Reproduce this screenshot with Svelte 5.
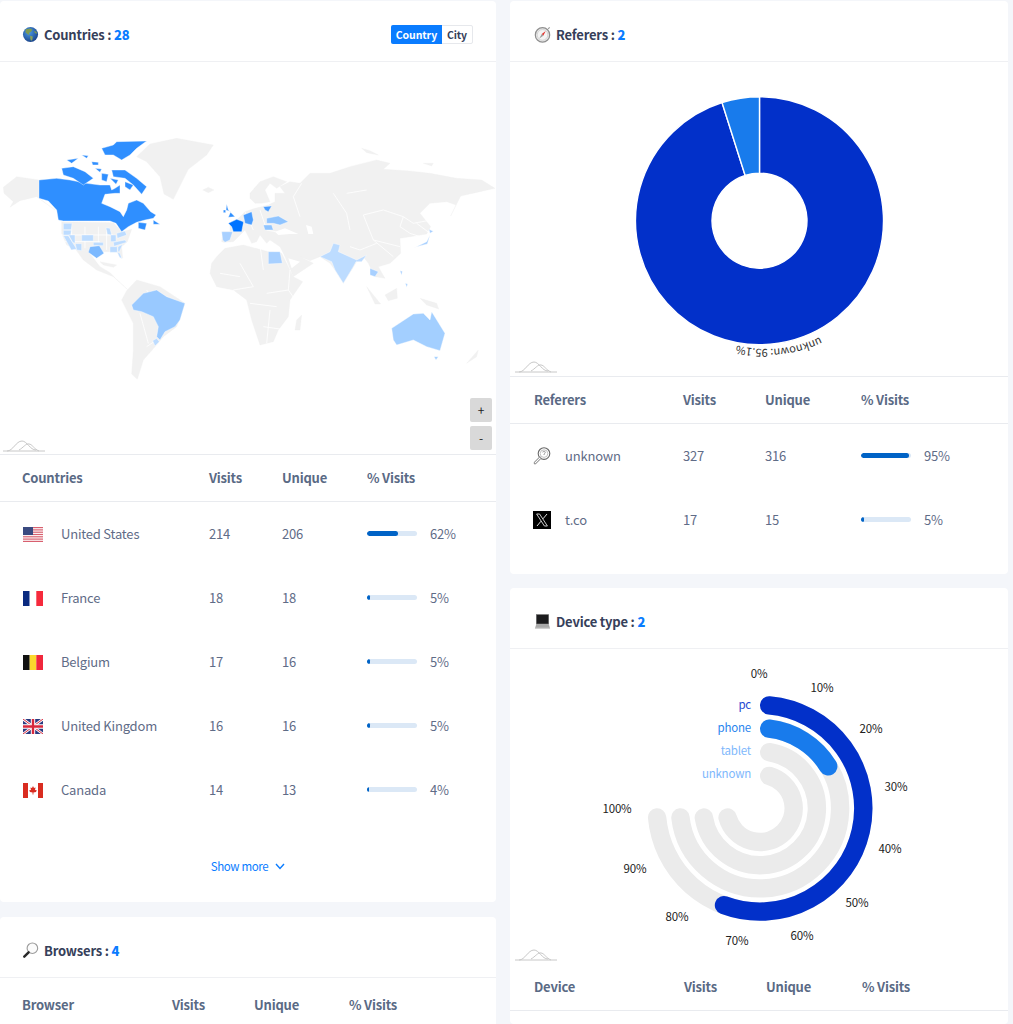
<script>
	const countries = [
		{ flag: 'us', name: 'United States', visits: 214, unique: 206, pct: 62 },
		{ flag: 'fr', name: 'France', visits: 18, unique: 18, pct: 5 },
		{ flag: 'be', name: 'Belgium', visits: 17, unique: 16, pct: 5 },
		{ flag: 'gb', name: 'United Kingdom', visits: 16, unique: 16, pct: 5 },
		{ flag: 'ca', name: 'Canada', visits: 14, unique: 13, pct: 4 }
	];
	const referers = [
		{ flag: 'unknown', name: 'unknown', visits: 327, unique: 316, pct: 95 },
		{ flag: 'x', name: 't.co', visits: 17, unique: 15, pct: 5 }
	];

	// map shapes, drawn at 3x page scale with y starting at 130
	const grey = '#f1f1f1';
	const shift = (dx, dy) => (pts) => pts.map((p, i) => (i % 2 === 0 ? p + dx : p + dy)).join(' ');
	const R = shift(750, 0);
	const N = shift(90, 15);
	const E = shift(630, 90);
	const land = [
		'10,172 50,140 117,150 117,205 165,240 140,222 110,200 60,212 30,232 40,215 12,190',
		'410,80 450,42 530,25 640,45 620,75 565,118 520,208 492,192 480,140 440,95',
		'608,180 625,172 642,180 625,188',
		'185,275 340,278 365,305 395,298 382,335 365,350 368,385 350,365 300,365 290,382 265,365 225,355 200,345 185,310',
		'225,355 265,365 300,410 330,428 352,450 382,478 340,440 290,420 250,390',
		'380,482 410,450 480,470 555,520 530,590 490,620 465,650 430,690 412,748 395,732 400,660 400,580 365,510',
		'300,395 350,405 340,412 310,405',
		E([20,290,45,265,100,255,175,275]) + ' ' + R([55,365,95,370,130,440,158,455,120,510,115,560,85,600,70,635,30,645,5,570,-10,510]) + ' 700,480 650,470 630,430 635,400',
		R([155,555,150,600,135,600,140,570]),
		'665,335 668,305 690,305 690,280 715,265 735,245 765,235 805,225 825,215 825,190 855,190 840,170 870,155 900,160 930,130 ' +
			R([240,130,300,110,380,90,420,100,400,118,470,122,540,130,620,145,695,150,735,175,690,185,632,198,602,258,618,225,590,215,540,220,510,250,542,290,530,312,480,320,450,325,452,370,420,400,385,410,405,445,375,440,355,400,340,380,320,395,280,460,255,420,240,400,210,380,180,392,150,380,190,400,130,440,105,380,90,350,60,330]) +
			' 800,340 780,315 770,335 755,340 735,300 730,305 700,335 670,337',
		E([120,100,150,65,190,50,230,65,200,85,180,70,165,90,180,125,155,130,135,130,120,115]),
		R([350,470,392,522,375,522]),
		R([405,495,440,475,442,505,415,512]),
		R([510,505,560,520,566,537,530,525]),
		R([650,700,685,660,680,680]),
		R([335,55,360,62,385,75,350,68]),
		R([520,100,550,100,545,108])
	];
	// seas cut out of the grey land
	const seas = [
		E([195,215,225,205,265,222,240,222,205,225]),
		R([168,285,185,290,190,312,175,312]),
		R([115,385,150,395,125,415])
	];
	const canada = [
		N([27,135,80,130,120,135,170,145,210,150,240,150,245,165,255,160,270,150,270,175,255,175,225,178,215,205,240,215,270,230,280,245,290,225,295,205,320,195,340,205,362,230,378,240,370,250,345,255,320,262,295,275,275,290,258,265,240,258,100,258,85,255,80,225,55,198,27,190]),
		N([215,40,250,30,260,20,350,18,320,40,300,60,275,75,250,60,225,60]),
		N([245,105,285,105,320,130,350,155,335,178,310,150,285,130,250,125]),
		N([95,100,130,95,165,110,190,130,160,150,130,130,100,120]),
		N([110,75,145,70,125,85]),
		N([185,80,205,82,205,90,188,90]),
		N([155,60,175,62,170,70]),
		N([215,115,235,118,230,140,215,135]),
		N([195,100,215,102,210,112]),
		N([240,130,265,135,258,148]),
		N([285,140,310,150,300,165,285,155]),
		N([325,262,350,265,345,285,325,280]),
		N([370,255,390,268,370,268])
	];
	const states = [
		N([100,265,126,265,124,284,100,284]), N([100,286,124,286,122,300,100,300]),
		N([100,302,115,302,140,342,124,345]), N([116,300,135,300,135,325,128,322]),
		N([136,326,155,326,155,347,140,345]), N([155,300,190,300,190,318,155,318]),
		N([228,278,240,280,245,300,232,298]), N([242,300,258,300,258,320,242,320]),
		N([260,295,285,288,290,300,262,310]), N([250,322,285,315,290,322,252,334]),
		N([240,335,262,335,262,352,240,352]), N([264,335,278,328,268,350,264,350]),
		N([190,322,220,322,220,332,190,332]), N([262,352,270,355,276,372,268,366])
	];
	const blues = [
		{ fill: '#2f8fff', shapes: canada },
		{ fill: '#bddcff', shapes: states },
		{ fill: '#7cb9ff', shapes: [N([180,335,208,332,222,355,200,370,175,352])] },
		{ fill: '#99c9ff', shapes: ['395,525 430,490 470,480 500,500 555,520 540,570 525,590 495,605 480,630 470,620 475,590 460,560 425,545 400,540'] },
		{ fill: '#bddcff', shapes: ['458,632 470,625 478,635 465,648'] },
		{ fill: '#0073ff', shapes: [E([55,190,80,178,100,185,100,190,95,215,70,215,65,200])] },
		{ fill: '#2f8fff', shapes: [E([50,132,55,150,75,170,55,172,62,155,48,150]), E([40,150,47,150,47,158,40,158])] },
		{ fill: '#4a9dff', shapes: [E([100,165,125,155,130,180,125,195,105,190]), E([160,140,185,138,175,155,165,150])] },
		{ fill: '#a8d0ff', shapes: [E([35,215,68,215,60,240,45,247,38,240])] },
		{ fill: '#8fc4ff', shapes: [E([170,175,205,168,235,185,210,195,190,190,170,190]), E([160,195,185,195,190,210,165,210])] },
		{ fill: '#a8d0ff', shapes: [R([55,365,90,365,97,400,55,402]), R([360,415,385,425,375,440,360,435]), R([490,355,530,335,540,315,532,342,500,350]), R([537,298,550,304,540,310]), R([450,422,457,424,455,436]), R([466,460,473,462,470,472])] },
		{ fill: '#bddcff', shapes: [R([210,380,240,365,250,340,270,345,265,365,320,390,350,375,335,395,318,395,310,410,280,460,255,420,245,395])] },
		{ fill: '#a3cfff', shapes: [R([425,595,490,552,520,550,540,570,545,545,585,610,570,662,530,650,490,630,440,645,430,630]), R([552,680,565,680,558,690])] }
	];
	// white borders over the grey land
	const borders = [
		'M215,290V355 M255,290V355 M295,290V345 M185,315H340 M195,335H300 M320,300V360 M345,320V350',
		'M905,160L880,200L900,260 M1000,190L1040,250L1050,300 M1090,255L1150,240L1210,260L1240,280L1320,265L1400,260 M1250,280L1290,310L1340,335L1400,330 M1210,260L1200,290L1230,310L1260,320',
		'M870,420L865,480L800,490 M900,430L960,430L940,510 M865,480L900,530L860,590 M780,345L790,420 M720,400L760,470 M750,520L830,530 M790,590L860,600 M810,540L800,640 M660,430L720,440 M700,480L760,470',
		'M440,480L470,530L430,545 M420,550L445,640 M470,630L440,650 M1090,255L1120,330L1200,350 M1120,330L1180,380',
		'M1130,340L1080,360L1050,350 M1100,180L1040,190 M735,245L760,300 M780,240L800,300L850,310 M700,280L730,240'
	];

	const polar = (x, y, r, deg) => {
		const a = ((deg - 90) * Math.PI) / 180;
		return [x + r * Math.cos(a), y + r * Math.sin(a)];
	};
	// donut, centre 759.5,220.7
	const cx = 759.5;
	const cy = 220.7;
	const slice = (from, to, ro, ri) => {
		const [a, b] = polar(cx, cy, ro, from);
		const [c, d] = polar(cx, cy, ro, to);
		const [e, f] = polar(cx, cy, ri, to);
		const [g, h] = polar(cx, cy, ri, from);
		const big = to - from > 180 ? 1 : 0;
		return `M${a} ${b}A${ro} ${ro} 0 ${big} 1 ${c} ${d}L${e} ${f}A${ri} ${ri} 0 ${big} 0 ${g} ${h}Z`;
	};

	// radial bars, centre 760,808
	const rx = 760;
	const ry = 808.3;
	const arc = (r, deg) => {
		const inset = (Math.asin(9.2 / r) * 180) / Math.PI;
		const [a, b] = polar(rx, ry, r, inset);
		const [c, d] = polar(rx, ry, r, deg - inset);
		return `M${a} ${b}A${r} ${r} 0 ${deg - 2 * inset > 180 ? 1 : 0} 1 ${c} ${d}`;
	};
	const rings = [
		{ label: 'pc', r: 103.3, deg: 205.5, color: '#0230c9', text: '#2448d2', y: 704 },
		{ label: 'phone', r: 80.1, deg: 65, color: '#187bec', text: '#2a85ee', y: 727 },
		{ label: 'tablet', r: 56.9, deg: 0, color: '', text: '#80b8fc', y: 750 },
		{ label: 'unknown', r: 33.7, deg: 0, color: '', text: '#80b8fc', y: 773 }
	];
	const ticks = [
		['0%', 759, 673], ['10%', 822, 687], ['20%', 871, 728], ['30%', 896, 786],
		['40%', 890, 848], ['50%', 857, 902], ['60%', 802, 935], ['70%', 737, 940],
		['80%', 677, 916], ['90%', 635, 868], ['100%', 617, 808]
	];
</script>

{#snippet amLogo(x, y)}
	<g transform="translate({x} {y})" fill="none" stroke="#c8c8c8" stroke-width="1">
		<path d="M0 11H42" />
		<path d="M4 11C10 11 13 1 19 1C24 1 27 10 33 10" />
		<path d="M16 10C20 8 23 3 26 4C29 4 31 9 36 11" />
	</g>
{/snippet}

{#snippet flagIcon(kind)}
	{#if kind === 'unknown' || kind === 'x'}
		<svg class="flag square" viewBox="0 0 18 18">
			{#if kind === 'unknown'}
				<circle cx="11" cy="6.6" r="5.8" fill="#fff" stroke="#6a6a6a" stroke-width="1.1" />
				<circle cx="11" cy="6.6" r="3.8" fill="none" stroke="#b5b5b5" stroke-width=".8" />
				<path d="M9.8 5.4C9.8 3.8 12.4 3.8 12.2 5.6C12 6.6 11 6.4 11 8" fill="none" stroke="#888" stroke-width=".9" />
				<path d="M7 11L2 16" stroke="#777" stroke-width="2.6" stroke-linecap="round" />
				<path d="M7 11L2 16" stroke="#fff" stroke-width="1.1" stroke-linecap="round" />
			{:else}
				<rect width="18" height="18" fill="#000" />
				<path d="M3.6 3H6.6L14.4 15H11.4Z" fill="none" stroke="#ddd" stroke-width=".9" />
				<path d="M14 3L10 7.8M8 10.2L4 15" stroke="#ddd" stroke-width="1" />
			{/if}
		</svg>
	{:else}
		<svg class="flag" viewBox="0 0 20 15">
			{#if kind === 'us'}
				<rect width="20" height="15" fill="#fff" />
				{#each [0, 2.3, 4.6, 6.9, 9.2, 11.5, 13.8] as s}
					<rect y={s} width="20" height="1.2" fill="#d8606f" />
				{/each}
				<rect width="10" height="8" fill="#3a4a80" />
			{:else if kind === 'fr'}
				<rect width="6.7" height="15" fill="#0a2a80" />
				<rect x="6.7" width="6.6" height="15" fill="#fff" />
				<rect x="13.3" width="6.7" height="15" fill="#f62a3c" />
			{:else if kind === 'be'}
				<rect width="6.7" height="15" fill="#111" />
				<rect x="6.7" width="6.6" height="15" fill="#fbd92c" />
				<rect x="13.3" width="6.7" height="15" fill="#f0283c" />
			{:else if kind === 'gb'}
				<rect width="20" height="15" fill="#2a3a80" />
				<path d="M0 0L20 15M20 0L0 15" stroke="#fff" stroke-width="2.6" />
				<path d="M0 0L20 15M20 0L0 15" stroke="#d8283c" stroke-width="1" />
				<path d="M10 0V15M0 7.5H20" stroke="#fff" stroke-width="4.4" />
				<path d="M10 0V15M0 7.5H20" stroke="#d8283c" stroke-width="2.4" />
			{:else}
				<rect width="20" height="15" fill="#fff" />
				<rect width="5" height="15" fill="#d92c20" />
				<rect x="15" width="5" height="15" fill="#d92c20" />
				<path d="M10 3L11 5L12.6 4.6L12 7L13.8 7.2L13 9L10.4 9.6V11.6H9.6V9.6L7 9L6.2 7.2L8 7L7.4 4.6L9 5Z" fill="#d92c20" />
			{/if}
		</svg>
	{/if}
{/snippet}

{#snippet titleIcon(kind)}
	<svg class="title-icon" viewBox="0 0 18 18">
		{#if kind === 'globe'}
			<defs>
				<radialGradient id="sea" cx="40%" cy="35%" r="75%">
					<stop offset="0" stop-color="#4c9be8" />
					<stop offset="1" stop-color="#14397e" />
				</radialGradient>
			</defs>
			<circle cx="9" cy="9" r="8" fill="url(#sea)" />
			<path d="M4 3.5L9 2.6L11 4L9.4 6.4L7.4 7.4L8 9.4L6.4 9L3.6 6.6Z" fill="#7f9a52" />
			<path d="M8.6 10.4L11.4 11L11 14L9.6 16L8.8 13.6Z" fill="#8aa35a" />
			<path d="M13 5L15.6 6.4L15.4 8.4L13.4 7.2Z" fill="#7f9a52" />
		{:else if kind === 'compass'}
			<circle cx="9" cy="9.4" r="7.6" fill="#e8e8e8" stroke="#8f8f8f" stroke-width="1.3" />
			<circle cx="9" cy="9.4" r="5.6" fill="#f4f4f4" stroke="#c4c4c4" stroke-width=".6" />
			<path d="M12.4 5.4L8.2 8.6L9.8 10.2Z" fill="#e3342f" />
			<path d="M5.6 13.2L8.2 8.6L9.8 10.2Z" fill="#9a9a9a" />
			<path d="M15 3L16.6 1.4" stroke="#999" stroke-width="1.2" />
		{:else if kind === 'lens'}
			<circle cx="11" cy="6.6" r="5.6" fill="#fbfbfb" stroke="#9c9c9c" stroke-width="1.2" />
			<path d="M7 11L2.4 15.6" stroke="#2a2a2a" stroke-width="2.6" stroke-linecap="round" />
		{:else}
			<rect x="2.4" y="1.6" width="13.2" height="10" fill="#1c1c1e" />
			<rect x="2.4" y="1.6" width="13.2" height="10" fill="none" stroke="#777" stroke-width=".5" />
			<path d="M2.4 11.6H15.6L17 16.4H1Z" fill="#a9a9a9" />
			<rect x="1" y="15.6" width="16" height="1.2" fill="#cfcfcf" />
		{/if}
	</svg>
{/snippet}

{#snippet tableHead(cols, labels)}
	<div class="row head {cols}">
		{#each labels as label}
			<span>{label}</span>
		{/each}
	</div>
{/snippet}

{#snippet dataRows(cols, rows)}
	{#each rows as item}
		<div class="row body {cols}">
			<span class="name">
				{@render flagIcon(item.flag)}
				{item.name}
			</span>
			<span>{item.visits}</span>
			<span>{item.unique}</span>
			<span class="share">
				<span class="track"><span class="fill" style:width="{item.pct}%"></span></span>
				{item.pct}%
			</span>
		</div>
	{/each}
{/snippet}

<div class="page">
	<div class="column left">
		<section class="card">
			<header>
				<h2>{@render titleIcon('globe')}Countries : <b>28</b></h2>
				<div class="toggle">
					<span class="on">Country</span>
					<span>City</span>
				</div>
			</header>
			<div class="map">
				<svg viewBox="0 62 496 392" width="496" height="392">
					<g transform="translate(0 130) scale(.33333)">
						{#each land as pts}
							<polygon points={pts} fill={grey} stroke={grey} stroke-width="1" stroke-linejoin="round" />
						{/each}
						{#each seas as pts}
							<polygon points={pts} fill="#fff" />
						{/each}
						{#each borders as d}
							<path {d} fill="none" stroke="#fff" stroke-width="2.4" />
						{/each}
						{#each blues as group}
							{#each group.shapes as pts}
								<polygon points={pts} fill={group.fill} stroke="#fff" stroke-width="1.2" stroke-linejoin="round" />
							{/each}
						{/each}
					</g>
					{@render amLogo(3, 440)}
				</svg>
				<div class="zoom-btns">
					<span>+</span>
					<span>-</span>
				</div>
			</div>
			{@render tableHead('c-country', ['Countries', 'Visits', 'Unique', '% Visits'])}
			{@render dataRows('c-country', countries)}
			<div class="more">
				Show more
				<svg width="10" height="7" viewBox="0 0 10 7"><path d="M1 1L5 5.4L9 1" fill="none" stroke="#0a7cff" stroke-width="1.4" /></svg>
			</div>
		</section>

		<section class="card">
			<header>
				<h2>{@render titleIcon('lens')}Browsers : <b>4</b></h2>
			</header>
			<div class="spacer"></div>
			{@render tableHead('c-browser', ['Browser', 'Visits', 'Unique', '% Visits'])}
		</section>
	</div>

	<div class="column right">
		<section class="card">
			<header>
				<h2>{@render titleIcon('compass')}Referers : <b>2</b></h2>
			</header>
			<div class="chart">
				<svg viewBox="510 62 498 314" width="498" height="314">
					<path d={slice(0, 342.4, 124, 47.5)} fill="#0230c9" stroke="#fff" stroke-width="1.4" />
					<path d={slice(342.4, 360, 124, 47.5)} fill="#187bec" stroke="#fff" stroke-width="1.4" />
					<path id="donut-label" d="M820 337A126.5 126.5 0 0 1 728 343" fill="none" />
					<text class="curve"><textPath href="#donut-label">unknown: 95.1%</textPath></text>
					{@render amLogo(515, 361)}
				</svg>
			</div>
			{@render tableHead('c-referer', ['Referers', 'Visits', 'Unique', '% Visits'])}
			{@render dataRows('c-referer', referers)}
		</section>

		<section class="card grow">
			<header>
				<h2>{@render titleIcon('laptop')}Device type : <b>2</b></h2>
			</header>
			<div class="chart plain">
				<svg viewBox="510 649 498 315" width="498" height="315">
					{#each rings as ring}
						<path d={arc(ring.r, 270)} fill="none" stroke="#ebebeb" stroke-width="18.4" stroke-linecap="round" />
						{#if ring.deg}
							<path d={arc(ring.r, ring.deg)} fill="none" stroke={ring.color} stroke-width="18.4" stroke-linecap="round" />
						{/if}
						<text class="ring-label" x="751" y={ring.y} fill={ring.text}>{ring.label}</text>
					{/each}
					{#each ticks as [label, x, y]}
						<text class="tick" {x} {y}>{label}</text>
					{/each}
					{@render amLogo(515, 949)}
				</svg>
			</div>
			{@render tableHead('c-device', ['Device', 'Visits', 'Unique', '% Visits'])}
		</section>
	</div>
</div>

<style>
	:global(body) {
		margin: 0;
		background: #f4f6fa;
		overflow: hidden;
	}
	.page {
		display: flex;
		gap: 14px;
		height: 1023px;
		padding-top: 1px;
		overflow: hidden;
		font-family: 'Noto Sans CJK SC', 'Noto Sans', sans-serif;
		color: #5f6c87;
		font-size: 13px;
		letter-spacing: -0.2px;
	}
	.column {
		display: flex;
		flex-direction: column;
		gap: 15px;
		flex: none;
	}
	.left {
		width: 496px;
	}
	.right {
		width: 498px;
		gap: 14px;
	}
	.card {
		background: #fff;
		border-radius: 4px;
	}
	.grow {
		flex: 1;
	}
	header {
		display: flex;
		align-items: center;
		justify-content: space-between;
		height: 54px;
		padding: 6px 23px 0 22px;
		border-bottom: 1px solid #eff0f3;
	}
	.right header {
		padding-left: 24px;
	}
	h2 {
		display: flex;
		align-items: center;
		margin: 0;
		font-size: 13px;
		font-weight: 700;
		color: #36405a;
		white-space: pre;
	}
	h2 b {
		color: #0a7cff;
	}
	.title-icon {
		width: 17px;
		height: 17px;
		margin-right: 5px;
	}
	.toggle {
		display: flex;
		height: 19px;
		box-sizing: border-box;
		font-size: 10.5px;
		font-weight: 700;
		line-height: 17px;
		color: #36405a;
		border: 1px solid #e6e8ec;
		border-radius: 2px;
		letter-spacing: -0.1px;
	}
	.toggle span {
		width: 30px;
		text-align: center;
	}
	.toggle .on {
		width: 51px;
		margin: -1px 0 -1px -1px;
		padding: 1px 0;
		background: #0a7cff;
		color: #fff;
		border-radius: 2px 0 0 2px;
	}
	.map,
	.chart {
		position: relative;
		border-bottom: 1px solid #e9ebef;
	}
	.chart.plain {
		border-bottom: 0;
	}
	.map svg,
	.chart svg {
		display: block;
	}
	.zoom-btns {
		position: absolute;
		right: 4px;
		bottom: 4px;
		display: flex;
		flex-direction: column;
		gap: 4px;
	}
	.zoom-btns span {
		width: 22px;
		height: 24px;
		background: #d9d9d9;
		border-radius: 2px;
		color: #222;
		font-size: 12px;
		line-height: 23px;
		text-align: center;
	}
	.spacer {
		height: 4px;
	}
	.row {
		display: grid;
		align-items: center;
		box-sizing: border-box;
		padding-bottom: 2px;
	}
	.head {
		height: 47px;
		font-weight: 700;
		color: #5a6a85;
		border-bottom: 1px solid #e9ebef;
	}
	.body {
		height: 64px;
	}
	.c-country {
		grid-template-columns: 187px 73px 85px 1fr;
		padding-left: 22px;
	}
	.c-browser {
		grid-template-columns: 150px 82px 95px 1fr;
		padding-left: 22px;
	}
	.c-referer {
		grid-template-columns: 149px 82px 96px 1fr;
		padding-left: 24px;
	}
	.c-device {
		grid-template-columns: 150px 82px 96px 1fr;
		padding-left: 24px;
	}
	.body.c-referer:last-child {
		margin-bottom: 22px;
	}
	.name {
		display: flex;
		align-items: center;
		gap: 18px;
	}
	.c-referer .name {
		gap: 14px;
	}
	.flag {
		width: 20px;
		height: 15px;
		margin: 2px 0 0 1px;
		flex: none;
	}
	.flag.square {
		width: 18px;
		height: 18px;
		margin-left: -1px;
	}
	.share {
		display: flex;
		align-items: center;
		gap: 13px;
	}
	.track {
		width: 50px;
		height: 5px;
		background: #dbe8f6;
		border-radius: 3px;
		overflow: hidden;
	}
	.fill {
		display: block;
		height: 100%;
		background: #0063c6;
		border-radius: 3px;
	}
	.more {
		display: flex;
		align-items: center;
		justify-content: center;
		gap: 7px;
		box-sizing: border-box;
		height: 80px;
		padding-top: 8px;
		font-size: 11.5px;
		letter-spacing: -0.35px;
		color: #0a7cff;
	}
	.curve {
		font-size: 11px;
		letter-spacing: 0;
		fill: #333;
	}
	.ring-label {
		font-size: 11.5px;
		text-anchor: end;
		dominant-baseline: central;
	}
	.tick {
		font-size: 11.5px;
		fill: #222;
		text-anchor: middle;
		dominant-baseline: central;
	}
</style>
